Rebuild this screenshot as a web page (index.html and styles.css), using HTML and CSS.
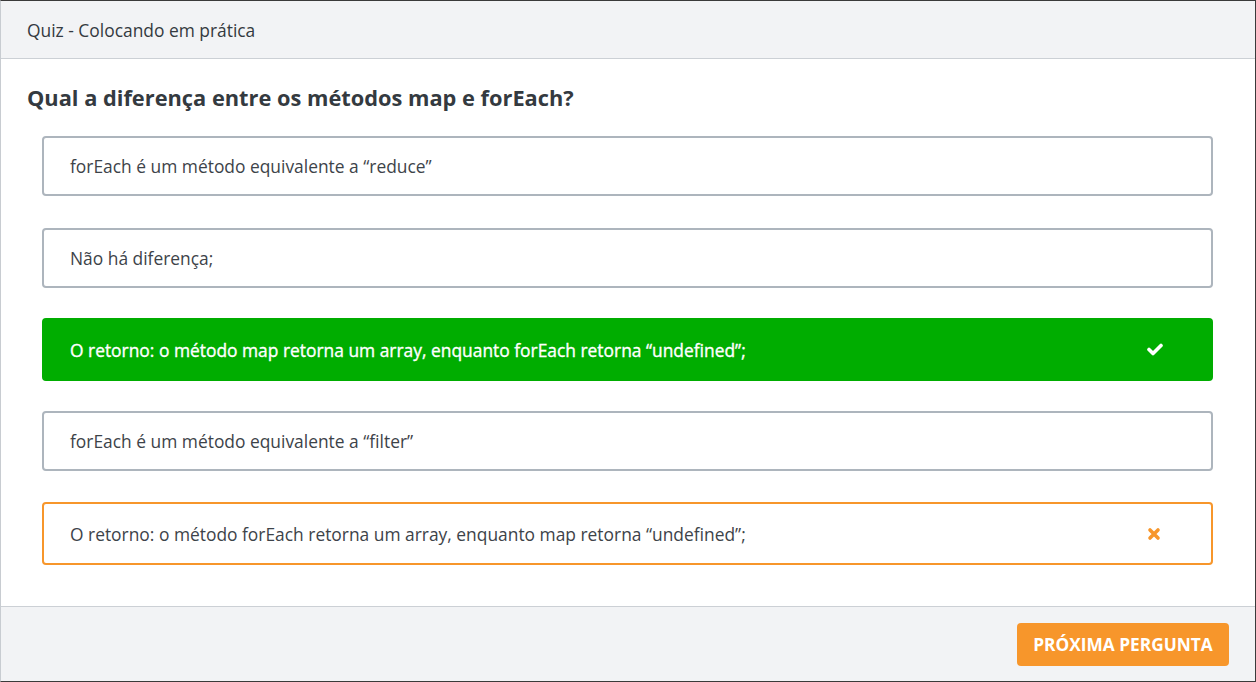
FILE: index.html
```html
<!DOCTYPE html>
<html lang="pt-BR">
<head>
<meta charset="utf-8">
<title>Quiz</title>
<link rel="stylesheet" href="styles.css">
</head>
<body>
<div class="modal">
  <header class="modal-header">Quiz - Colocando em prática</header>
  <main class="modal-body">
    <h1 class="question">Qual a diferença entre os métodos map e forEach?</h1>
    <ul class="options">
      <li class="option"><span>forEach é um método equivalente a “reduce”</span></li>
      <li class="option"><span>Não há diferença;</span></li>
      <li class="option correct"><span>O retorno: o método map retorna um array, enquanto forEach retorna “undefined”;</span>
        <svg class="icon" width="16" height="13" viewBox="0 0 16 13"><path d="M2 6.5 L6 10.5 L14 2.5" fill="none" stroke="#fff" stroke-width="3.6" stroke-linecap="round" stroke-linejoin="round"/></svg>
      </li>
      <li class="option"><span>forEach é um método equivalente a “filter”</span></li>
      <li class="option wrong"><span>O retorno: o método forEach retorna um array, enquanto map retorna “undefined”;</span>
        <svg class="icon" width="14" height="14" viewBox="0 0 14 14"><path d="M3 3 L11 11 M11 3 L3 11" fill="none" stroke="#f7962b" stroke-width="3.6" stroke-linecap="round"/></svg>
      </li>
    </ul>
  </main>
  <footer class="modal-footer">
    <button class="next">PRÓXIMA PERGUNTA</button>
  </footer>
</div>
</body>
</html>
```
FILE: styles.css
```css
* { box-sizing: border-box; }
html, body { margin: 0; padding: 0; }
body {
  font-family: "Open Sans", "Liberation Sans", sans-serif;
  color: #343a40;
  background: #fff;
}
.modal {
  height: 682px;
  display: flex;
  flex-direction: column;
  border: 1px solid #3a3a3a;
  border-left-color: #c8ccd1;
  background: #fff;
}
.modal-header {
  height: 58px;
  flex: none;
  background: #f2f3f5;
  border-bottom: 1px solid #ccd0d5;
  padding: 0 26px;
  display: flex;
  align-items: center;
  font-size: 17.4px;
  color: #343a40;
}
.modal-body {
  flex: 1;
  padding: 24px 26px 0;
}
.question {
  margin: 0 0 24px;
  font-size: 21.8px;
  line-height: 29px;
  font-weight: 700;
  color: #343a40;
}
.options {
  list-style: none;
  margin: 0;
  padding: 0 16px 0 15px;
}
.option {
  height: 60px;
  margin-bottom: 31px;
  border: 2px solid #adb5bd;
  border-radius: 4px;
  display: flex;
  align-items: center;
  justify-content: space-between;
  padding: 0 50px 0 26px;
  font-size: 17.4px;
  color: #3d4349;
}
.option:first-child { margin-bottom: 32px; }
.option:nth-child(2) { margin-bottom: 30px; }
.option.correct {
  height: 63px;
  margin-bottom: 30px;
  padding-right: 48px;
  background: #00ad00;
  border-color: #00ad00;
  color: #fff;
  -webkit-text-stroke: 0.35px #fff;
}
.option.wrong {
  height: 63px;
  border-color: #f7962b;
}
.icon { flex: none; }
.modal-footer {
  height: 75px;
  flex: none;
  background: #f2f3f5;
  border-top: 1px solid #ccd0d5;
  display: flex;
  align-items: center;
  justify-content: flex-end;
  padding: 0 26px 0 0;
}
.next {
  width: 212px;
  height: 43px;
  background: #f7962b;
  color: #fff;
  border: none;
  border-radius: 4px;
  font-family: "Open Sans", "Liberation Sans", sans-serif;
  font-weight: 700;
  font-size: 17.3px;
  padding: 0;
}
```
